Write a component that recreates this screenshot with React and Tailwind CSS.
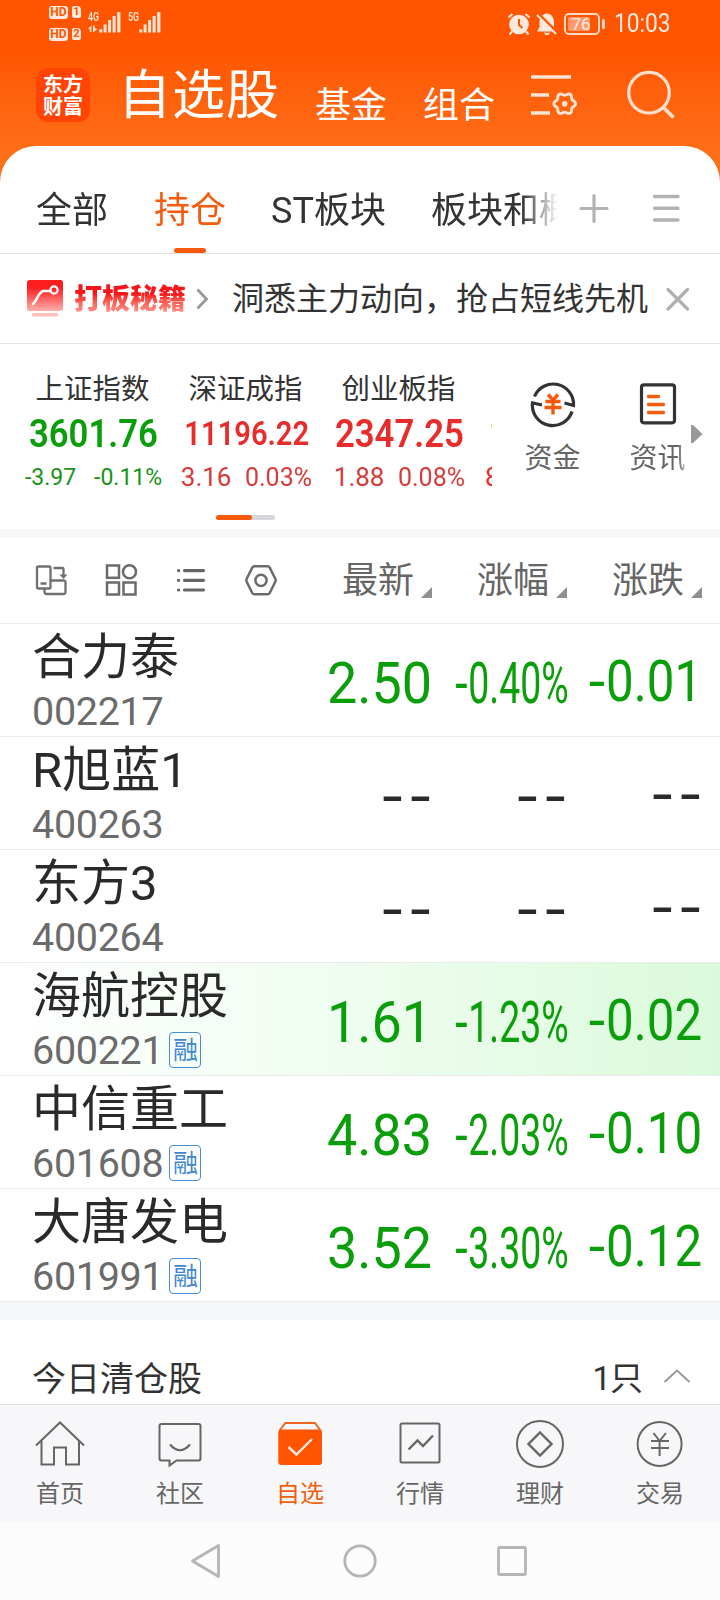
import React, { useState } from "react";
import clsx from "clsx";

const indices = [
  { name: "上证指数", value: "3601.76", diff: "-3.97", pct: "-0.11%", down: true },
  { name: "深证成指", value: "11196.22", diff: "3.16", pct: "0.03%", small: true },
  { name: "创业板指", value: "2347.25", diff: "1.88", pct: "0.08%" },
];

const stocks = [
  { name: "合力泰", code: "002217", price: "2.50", pct: "-0.40%", diff: "-0.01" },
  { name: "R旭蓝1", code: "400263" },
  { name: "东方3", code: "400264" },
  { name: "海航控股", code: "600221", price: "1.61", pct: "-1.23%", diff: "-0.02", margin: true, active: true },
  { name: "中信重工", code: "601608", price: "4.83", pct: "-2.03%", diff: "-0.10", margin: true },
  { name: "大唐发电", code: "601991", price: "3.52", pct: "-3.30%", diff: "-0.12", margin: true },
];

// six-lobed gear outline
const gearPath = (cx, cy) => {
  const pts = [];
  for (let i = 0; i < 72; i++) {
    const a = (i * Math.PI) / 36;
    const r = 9.7 + 1.2 * Math.cos(6 * a);
    pts.push(`${(cx + r * Math.cos(a)).toFixed(2)} ${(cy + r * Math.sin(a)).toFixed(2)}`);
  }
  return `M${pts.join("L")}Z`;
};

/* ================= STATUS BAR ================= */
const HdBadge = ({ n }) => (
  <div className="flex gap-[4px]">
    <span className="w-[19px] h-[13px] rounded-[3px] bg-[#ffe9de] text-[#ff5500] text-[12px] leading-[13px] font-bold text-center">HD</span>
    <span className="w-[9px] h-[12px] rounded-[2px] rounded-tr-[4px] bg-[#ffe9de] text-[#ff5500] text-[11px] leading-[12px] font-bold text-center">{n}</span>
  </div>
);

const Signal = ({ label, data }) => (
  <div className="relative w-[33px] h-[22px]">
    <span className="absolute left-0 -top-px text-[13px] leading-[12px] font-medium origin-left scale-x-[.68] text-[#ffe9de]">{label}</span>
    <svg className="absolute inset-0" width="33" height="22" fill="#ffe4d6">
      <rect x="11.3" y="17.3" width="3" height="3.2" />
      <rect x="15.600" y="12.5" width="3" height="8" />
      <rect x="20.1" y="8" width="3" height="12.5" />
      <rect x="24.600" y="4" width="3" height="16.500" />
      <rect x="29.200" y="0" width="3.200" height="20.500" />
      {data && <path d="M0 17 3.4 13.2V20H1.8V17ZM5 13.5H6.6V16L9.500 17L5 20.500Z" />}
    </svg>
  </div>
);

const StatusBar = () => (
  <div className="h-[46px] flex items-start text-[#ffe9de]">
    <div className="ml-[49px] mt-[6px] flex flex-col gap-[9px]">
      <HdBadge n="1" />
      <HdBadge n="2" />
    </div>
    <div className="ml-[7px] mt-[12px] flex gap-[7px]">
      <Signal label="4G" data />
      <Signal label="5G" />
    </div>
    <div className="ml-auto mr-[49px] mt-[11px] flex items-center">
      <svg width="24" height="24" viewBox="0 0 24 24" fill="none" stroke="#ffe9de" strokeWidth="2">
        <circle cx="12" cy="12.500" r="9.800" fill="#ffe9de" stroke="none" />
        <path d="M1.500 5.500 5.500 2M22.500 5.500 18.500 2M5 19.500 2.500 22.500M19 19.500 21.500 22.500" />
        <path d="M12 7V13L15.500 16" stroke="#ff5500" />
      </svg>
      <svg className="ml-[5px]" width="22" height="24" viewBox="0 0 22 24" fill="#ffe9de">
        <path d="M11 1.500C7 2 3.500 5 3.500 10V15L1.500 18.500V19.500H19.500V18.500L18 15V10C18 5 15 2 11 1.500Z" />
        <path d="M8 20.800H14Q13 23.300 11 23.300T8 20.800Z" />
        <path d="M2.300 1.700 21.300 20.700" stroke="#ff5500" strokeWidth="3" />
        <path d="M1 3 20 22" stroke="#ffe9de" strokeWidth="2" />
      </svg>
      <div className="relative ml-[6px] w-9 h-[22px] rounded-[5px] border-2 border-[#ffd9c6] p-[2px]">
        <div className="w-[22px] h-full rounded-[2px] bg-[#ff996b]" />
        <span className="absolute inset-0 -left-0.5 text-center text-[17px] leading-[19px]">76</span>
      </div>
      <div className="ml-[2px] w-[3px] h-[10px] rounded-sm bg-[#ffd9c6]" />
      <span className="ml-[9px] mt-px w-[57px] text-[25px] leading-[24px] whitespace-nowrap">
        <span className="inline-block origin-left scale-x-[.91]">10:03</span>
      </span>
    </div>
  </div>
);

/* ================= HEADER ================= */
const Header = () => (
  <div className="h-[100px] flex items-start text-white">
    <div className="ml-[36px] mt-[22px] size-[54px] rounded-[12px] bg-[#ff4406] flex flex-col items-center justify-center font-['Noto_Sans_CJK_SC'] font-bold text-[20px] leading-[22px]">
      东方<br />财富
    </div>
    <h1 className="ml-[28px] mt-[10px] text-[53px] leading-[80px] tracking-[1px] whitespace-nowrap">自选股</h1>
    <span className="ml-[35px] mt-[31px] text-[36px] leading-[58px]">基金</span>
    <span className="ml-[36px] mt-[31px] text-[36px] leading-[58px]">组合</span>
    <svg className="ml-[36px] mt-[26px]" width="50" height="48" fill="none" stroke="#ffe4d4" strokeWidth="3.400">
      <path d="M0 5H40M0 23H18M0 41H19" />
      <path strokeWidth="2.900" strokeLinejoin="round" d={gearPath(33.7, 31.7)} />
      <circle cx="33.700" cy="31.700" r="2.800" fill="#ffe4d4" stroke="none" />
    </svg>
    <svg className="ml-[46px] mt-[24px]" width="50" height="50" fill="none" stroke="#ffe0cc" strokeWidth="3.200">
      <circle cx="22" cy="22.700" r="20.300" />
      <path d="M36.500 37.500 46.500 47.500" strokeWidth="3.800" />
    </svg>
  </div>
);

const Tabs = () => {
  const [tab, setTab] = useState("持仓");
  const tabs = ["全部", "持仓", "ST板块", "板块和概念"];

  return (
    <div className="h-[108px] border-b border-[#e2e2e2] flex">
      <div className="w-[558px] pl-[36px] flex gap-[46px] overflow-hidden whitespace-nowrap [mask-image:linear-gradient(to_right,#000_522px,transparent_558px)]">
        {tabs.map((t) => (
          <button
            key={t}
            onClick={() => setTab(t)}
            className={clsx(
              "relative h-full shrink-0 text-[36px] leading-[36px] pb-[15px] pt-[38px]",
              t.startsWith("ST") && "-ml-px -mr-px",
              tab === t ? "text-[#f75a0d]" : "text-[#333]"
            )}
          >
            {t}
            {tab === t && <i className="absolute bottom-0 left-[20px] w-8 h-[5px] rounded-full bg-[#f75a0d]" />}
          </button>
        ))}
      </div>
      <svg className="ml-[20px] mt-[46px]" width="32" height="32" stroke="#b3b3b3" strokeWidth="3.200" strokeLinecap="round">
        <path d="M3 16.500H29M16 3.500V29.500" />
      </svg>
      <svg className="ml-[40px] mt-[46px]" width="32" height="32" stroke="#b3b3b3" strokeWidth="3.400" strokeLinecap="round">
        <path d="M4.500 4.500H28M4.500 16.300H28M4.500 28H28" />
      </svg>
    </div>
  );
};

const Promo = () => (
  <div className="h-[90px] pl-[27px] border-b border-[#e2e2e2] flex items-center">
    <svg width="36" height="38" viewBox="0 0 36 38" fill="none">
      <defs>
        <linearGradient id="promo" x1="0" y1="0" x2="0" y2="1">
          <stop offset=".25" stopColor="#fb1e1e" />
          <stop offset="1" stopColor="#ffb0ac" />
        </linearGradient>
      </defs>
      <rect width="36" height="31" rx="2.500" fill="url(#promo)" />
      <rect x="5" y="33" width="26" height="3.500" rx="1.500" fill="#ffc0bc" />
      <path d="M6 24C10 21 11 12.500 16 11H23.500" stroke="#fff" strokeWidth="2.600" strokeLinecap="round" />
      <circle cx="27" cy="10" r="3.600" stroke="#fff" strokeWidth="2.200" />
    </svg>
    <b className="ml-[11px] mt-[2px] text-[28px] leading-[38px] font-black bg-gradient-to-b from-[#f8151a] from-35% to-[#ff9d9a] to-90% bg-clip-text text-transparent">打板秘籍</b>
    <svg className="ml-[10px]" width="14" height="24" fill="none" stroke="#999" strokeWidth="2.800">
      <path d="M1.500 2.500 10.500 12 1.500 21.500" />
    </svg>
    <span className="ml-[22px] mt-px text-[32px] leading-[40px] text-[#333] whitespace-nowrap">洞悉主力动向，抢占短线先机</span>
    <svg className="ml-[17px]" width="26" height="26" stroke="#b0b0b0" strokeWidth="3.200" strokeLinecap="round">
      <path d="M3 3.500 22.500 23M22.500 3.500 3 23" />
    </svg>
  </div>
);

/* ================= INDICES ================= */
const IndexCell = ({ item }) => (
  <div className="w-[153px] shrink-0 text-center whitespace-nowrap">
    <div className="relative -left-px text-[28.500px] leading-[36px] text-[#333]">{item.name}</div>
    <div className={clsx("mt-[4px] text-[39px] leading-[44px] font-semibold flex justify-center items-baseline", item.down ? "text-[#0a9f0a]" : "text-[#e82b2b]")}>
      <span className={item.small ? "text-[33.500px] scale-x-[.87]" : "scale-x-[.89]"}>{item.value}</span>
    </div>
    <div className={clsx("mt-[5px] h-8 leading-[32px] flex justify-center items-baseline", item.down ? "text-[23px] pt-[1px] text-[#179317] gap-[18px]" : "text-[26px] text-[#d93a3a] gap-[14px]")}>
      <span className={item.down ? "" : "-ml-[3px]"}>{item.diff}</span>
      <span className={item.down ? "" : "-mr-[6px] origin-left scale-x-[.96]"}>{item.pct}</span>
    </div>
  </div>
);

const Indices = () => (
  <div className="relative h-[185px] flex">
    <div className="w-[492px] pl-[17px] pt-[28px] flex overflow-hidden">
      {indices.map((item) => (
        <IndexCell key={item.name} item={item} />
      ))}
      {/* next index, only its edge is on screen */}
      <div className="shrink-0 text-[#e82b2b] pt-[40px] pl-[9px]">
        <div className="pl-[4px] text-[33.500px] leading-[44px] font-semibold">1</div>
        <div className="mt-[5px] text-[26px] leading-[32px]">8</div>
      </div>
    </div>
    <div className="ml-[8px] flex pt-[36px] text-[28px] leading-[36px] text-[#666] text-center">
      <div className="w-[105px] flex flex-col items-center">
        <svg width="48" height="48" viewBox="0 0 48 48" fill="none" stroke="#333" strokeWidth="3.200">
          <path d="M5.500 16.500A20.300 20.300 0 0 1 44.500 25.500L35.500 23" />
          <path d="M43 31.500A20.300 20.300 0 0 1 3.500 23L13 25" />
          <path d="M19 14.500 24 20 29 14.500M16.500 21.500H31.500M15.500 27.500H32.500M24 20V34.500" stroke="#f75a0d" strokeWidth="3.400" />
        </svg>
        <span className="mt-[13px]">资金</span>
      </div>
      <div className="w-[105px] flex flex-col items-center">
        <svg width="48" height="48" viewBox="0 0 48 48" fill="none" stroke="#333" strokeWidth="3.200">
          <rect x="7.500" y="4.800" width="33" height="38" rx="2.500" />
          <path d="M14.500 16.500H24.500M14.500 24.500H29.500M14.500 32.500H29.500" stroke="#f0600f" strokeWidth="3.400" strokeLinecap="round" />
        </svg>
        <span className="mt-[13px] [mask-image:linear-gradient(to_right,#000_48px,#0008_56px)]">资讯</span>
      </div>
    </div>
    <svg className="absolute left-[691px] top-[81px]" width="12" height="18" fill="#999">
      <path d="M0 0H2L11.500 9 2 18H0Z" />
    </svg>
    <div className="absolute left-[216px] top-[171px] w-[59px] h-[5px] rounded-full bg-[#d5d7dc]">
      <div className="w-[36px] h-full rounded-full bg-[#f75a0d]" />
    </div>
  </div>
);

/* ================= STOCK LIST ================= */
const ListHeader = () => (
  <div className="h-[86px] border-b border-[#ebebeb] pl-[33px] flex items-center text-[#666]">
    <div className="w-[309px] shrink-0 flex gap-[34px]">
      <svg width="36" height="36" fill="none" stroke="#707070" strokeWidth="2.300">
        <rect x="4" y="3.500" width="13.500" height="22" rx="1.500" />
        <path d="M7.500 20.500H13.500M20.500 5H29.500Q30.500 5 30.500 6V13M11.500 26V28.500Q11.500 31 13.500 31H30.500Q32.500 31 32.500 29V19.500Q32.500 17.500 30.500 17.500H18" />
        <path d="M26.500 11.500H34.500L30.500 16Z" fill="#707070" stroke="none" />
      </svg>
      <svg width="36" height="36" fill="none" stroke="#6b6b6b" strokeWidth="2.500">
        <rect x="4" y="2.500" width="12" height="12.300" />
        <circle cx="26.500" cy="8.700" r="6.500" />
        <rect x="4" y="19.500" width="12" height="12" />
        <rect x="20.500" y="19.500" width="12" height="12" />
      </svg>
      <svg width="36" height="36" fill="none" stroke="#666" strokeWidth="3.200" strokeLinecap="round">
        <path d="M11.500 7.600H30.500M11.500 17.300H30.500M11.500 27H30.500M5.500 7.600H5.700M5.500 17.300H5.700M5.500 27H5.700" />
      </svg>
      <svg width="36" height="36" fill="none" stroke="#6b6b6b" strokeWidth="2.500" strokeLinejoin="round">
        <path d="M11.500 3.300H24.500Q26 3.300 26.700 4.600L32.300 15.800Q33 17.300 32.300 18.800L26.700 30Q26 31.300 24.500 31.300H11.500Q10 31.300 9.300 30L3.700 18.800Q3 17.300 3.700 15.800L9.300 4.600Q10 3.300 11.500 3.300Z" />
        <circle cx="18" cy="17.300" r="5.600" />
      </svg>
    </div>
    {["最新", "涨幅", "涨跌"].map((label) => (
      <div key={label} className="w-[135px] shrink-0 flex">
        <span className="mt-px text-[36px] leading-[40px]">{label}</span>
        <svg className="ml-[7px] mt-[27px]" width="11" height="11">
          <path d="M11 0V11H0Z" fill="#909094" />
        </svg>
      </div>
    ))}
  </div>
);

const Dashes = () => (
  <span className="-mt-[2px] font-['Liberation_Sans'] tracking-[3.300px] -mr-[4px] origin-right scale-x-[1.230] text-[#2a2a2a]">--</span>
);

// a little wider minus than the font's hyphen
const Signed = ({ text, className }) => (
  <span className={className}>
    {text[0] === "-" && <span className="inline-block origin-right scale-x-[1.200] mr-px">-</span>}
    {text.replace("-", "")}
  </span>
);

const StockRow = ({ stock }) => (
  <div
    className={clsx(
      "h-[113px] border-b border-[#ebebeb] pl-[32px] flex whitespace-nowrap",
      stock.active && "bg-gradient-to-r from-white via-[#f0fdf1] via-45% to-[#dbfadb]"
    )}
  >
    <div className="w-[265px] pt-[2px]">
      <div className="text-[49px] leading-[64px] text-[#2a2a2a]">{stock.name}</div>
      <div className="mt-[2px] flex items-center">
        <span className="text-[39.500px] leading-[40px] tracking-[-0.300px] text-[#6b6b6b]">{stock.code}</span>
        {stock.margin && (
          <span className="ml-[6px] w-[32px] h-[36px] mt-[-2px] border border-[#4a8ed2] rounded-[4px] text-[25px] leading-[35px] text-center text-[#3f88d0]">
            融
          </span>
        )}
      </div>
    </div>
    <div className="flex text-[58px] leading-[112px] text-[#0a9f0a]">
      <div className="w-[135px] pt-[3px] flex justify-end">
        {stock.price ? <span className="origin-right scale-x-[.930]">{stock.price}</span> : <Dashes />}
      </div>
      <div className="w-[135px] pt-[3px] flex justify-end">
        {stock.pct ? <Signed text={stock.pct} className="-mr-[2px] origin-right scale-x-[.645]" /> : <Dashes />}
      </div>
      <div className="w-[135px] pt-px flex justify-end">
        {stock.diff ? <Signed text={stock.diff} className="origin-right scale-x-[.850]" /> : <Dashes />}
      </div>
    </div>
  </div>
);

/* ================= BOTTOM ================= */
const navItems = [
  {
    label: "首页",
    icon: <path d="M1 25.500 25 2.500 49 25.500M6.500 21V44.500H19V27.500H31V44.500H44V21" />,
  },
  {
    label: "社区",
    icon: (
      <>
        <path d="M6.500 4H43.500Q45.500 4 45.500 6V38.500Q45.500 40.500 43.500 40.500H21.500L14.500 45.500V40.500H6.500Q4.500 40.500 4.500 38.500V6Q4.500 4 6.500 4Z" />
        <path d="M15 24.500Q25 36 35 24.500" strokeWidth="2.200" />
      </>
    ),
  },
  {
    label: "自选",
    active: true,
    icon: (
      <>
        <path d="M4.500 10.500 10.500 3H40L45.500 10.500" stroke="#f0641e" />
        <rect x="3.300" y="9.500" width="43.700" height="35.500" rx="3" fill="#ff5500" stroke="none" />
        <path d="M13.500 27 21.500 34.500 37 19" stroke="#ffe9de" strokeWidth="2.400" />
      </>
    ),
  },
  {
    label: "行情",
    icon: (
      <>
        <rect x="5.500" y="3.500" width="39" height="39" rx="1.500" />
        <path d="M13.500 29.500 22.500 20.500 28 26 38 15.500" strokeWidth="2.400" />
      </>
    ),
  },
  {
    label: "理财",
    icon: (
      <>
        <circle cx="25" cy="24" r="23" />
        <path d="M25 12.500 36.500 24 25 35.500 13.500 24Z" strokeWidth="2.400" />
      </>
    ),
  },
  {
    label: "交易",
    icon: (
      <>
        <circle cx="24.600" cy="24" r="22" />
        <path d="M18.500 13 24.600 21 31 13M16 21H34M16 28H34M24.600 21V36" />
      </>
    ),
  },
];

const BottomNav = () => (
  <div className="h-[118px] border-t border-[#e0e0e0] bg-[#f7f7fa] flex">
    {navItems.map((item) => (
      <div key={item.label} className="w-[120px] pt-[15px] flex flex-col items-center">
        <svg width="50" height="48" fill="none" stroke="#666" strokeWidth="2">
          {item.icon}
        </svg>
        <span className={clsx("mt-[10px] text-[24px] leading-[32px]", item.active ? "text-[#f0600f]" : "text-[#666]")}>{item.label}</span>
      </div>
    ))}
  </div>
);

const SystemNav = () => (
  <div className="h-[78px] bg-[#fcfcfc] pl-[189px] flex items-center">
    <svg width="34" height="36" fill="none" stroke="#b5b5b5" strokeWidth="2.800" strokeLinejoin="round">
      <path d="M29.500 2.500V33.500L3.500 18Z" />
    </svg>
    <svg className="ml-[119px]" width="36" height="36" fill="none" stroke="#b5b5b5" strokeWidth="2.800">
      <circle cx="18" cy="18" r="15.200" />
    </svg>
    <svg className="ml-[116px]" width="36" height="36" fill="none" stroke="#b5b5b5" strokeWidth="2.800">
      <rect x="4.500" y="4.500" width="27" height="27" rx="1.500" />
    </svg>
  </div>
);

const App = () => {
  return (
    <div className="w-[720px] h-[1600px] overflow-hidden bg-gradient-to-b from-[#ff5500] from-[3%] to-[#ff7019] to-[10%] font-[Roboto,'Noto_Sans_CJK_SC',sans-serif]">
      <StatusBar />
      <Header />
      <div className="rounded-t-[36px] bg-white">
        <Tabs />
        <Promo />
        <Indices />
        <div className="h-[9px] bg-[#f6f7f9]" />
        <ListHeader />
        {stocks.map((s) => (
          <StockRow key={s.code} stock={s} />
        ))}
        <div className="h-[18px] bg-[#f6f7f9]" />
        <div className="h-[84px] pl-[32px] pr-[29px] pt-[33px] flex items-start text-[34px] leading-[52px] text-[#333]">
          <span>今日清仓股</span>
          <span className="ml-auto text-[33px]">
            <span className="-mr-px">1</span>只
          </span>
          <svg className="ml-[20px] mt-[14px]" width="28" height="18" fill="none" stroke="#999" strokeWidth="2">
            <path d="M1.500 15 14 3.500 26.500 15" />
          </svg>
        </div>
        <BottomNav />
        <SystemNav />
      </div>
    </div>
  );
};

export default App;
